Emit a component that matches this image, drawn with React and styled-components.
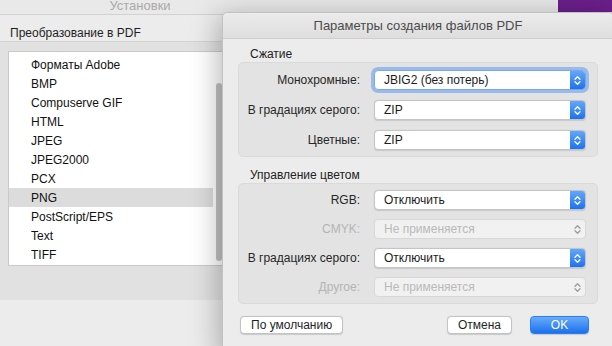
import React from 'react'
import styled, { createGlobalStyle, css } from 'styled-components'

const Global = createGlobalStyle`
  html, body { margin: 0; padding: 0; }
  body {
    font-family: "Liberation Sans", Arial, sans-serif;
    background: #ececec;
    -webkit-font-smoothing: antialiased;
  }
`

const formats = [
  'Форматы Adobe', 'BMP', 'Compuserve GIF', 'HTML', 'JPEG', 'JPEG2000',
  'PCX', 'PNG', 'PostScript/EPS', 'Text', 'TIFF',
]

const Chevrons = ({ color }) => (
  <svg width="9" height="13" viewBox="0 0 9 13">
    <path d="M2 5.2 L4.5 2.7 L7 5.2" fill="none" stroke={color} strokeWidth="1.3" strokeLinecap="round" strokeLinejoin="round" />
    <path d="M2 7.8 L4.5 10.3 L7 7.8" fill="none" stroke={color} strokeWidth="1.3" strokeLinecap="round" strokeLinejoin="round" />
  </svg>
)

function Popup({ value, disabled, focused }) {
  return (
    <Select disabled={disabled} focused={focused}>
      <SelectValue>{value}</SelectValue>
      <Arrow disabled={disabled}>
        <Chevrons color={disabled ? '#9c9c9c' : '#ffffff'} />
      </Arrow>
    </Select>
  )
}

function FieldRow({ label, value, disabled, focused }) {
  return (
    <Row>
      <Label disabled={disabled}>{label}</Label>
      <Popup value={value} disabled={disabled} focused={focused} />
    </Row>
  )
}

export default function App() {
  return (
    <Screen>
      <Global />
      <TopBar>
        <WinTitle>Установки</WinTitle>
        <Desktop />
      </TopBar>
      <Header>Преобразование в PDF</Header>
      <Panel>
        <ListBox>
          <Items>
            {formats.map((f) => (
              <Item key={f} selected={f === 'PNG'}>{f}</Item>
            ))}
          </Items>
          <Track>
            <Thumb />
          </Track>
        </ListBox>
      </Panel>

      <Dialog>
        <DialogTitle>Параметры создания файлов PDF</DialogTitle>
        <Body>
          <SectionLabel>Сжатие</SectionLabel>
          <Group>
            <FieldRow label="Монохромные:" value="JBIG2 (без потерь)" focused />
            <FieldRow label="В градациях серого:" value="ZIP" />
            <FieldRow label="Цветные:" value="ZIP" />
          </Group>
          <SectionLabel second>Управление цветом</SectionLabel>
          <Group tight>
            <FieldRow label="RGB:" value="Отключить" />
            <FieldRow label="CMYK:" value="Не применяется" disabled />
            <FieldRow label="В градациях серого:" value="Отключить" />
            <FieldRow label="Другое:" value="Не применяется" disabled />
          </Group>
          <Buttons>
            <Button>По умолчанию</Button>
            <Spacer />
            <Button wide>Отмена</Button>
            <Button primary>OK</Button>
          </Buttons>
        </Body>
      </Dialog>
    </Screen>
  )
}

const Screen = styled.div`
  position: relative;
  width: 612px;
  height: 346px;
  overflow: hidden;
  background: #ececec;
  display: flex;
  flex-direction: column;
`

const TopBar = styled.div`
  height: 14px;
  display: flex;
  background: #e9e9e9;
  border-bottom: 1px solid #d2d2d2;
`

const WinTitle = styled.div`
  width: 280px;
  text-align: center;
  font-size: 13px;
  line-height: 11px;
  color: #a9a9a9;
`

const Desktop = styled.div`
  margin-left: auto;
  width: 54px;
  height: 12px;
  background: #6a1f8b;
`

const Header = styled.div`
  height: 27px;
  display: flex;
  align-items: flex-end;
  padding: 0 10px 1px;
  box-sizing: border-box;
  font-size: 12px;
  line-height: 14px;
  color: #1f1f1f;
  border-bottom: 1px solid #d3d3d3;
  background: #ececec;
`

const Panel = styled.div`
  height: 258px;
  box-sizing: border-box;
  padding: 9px 0 0 8px;
  background: #e1e1e1;
`

const ListBox = styled.div`
  width: 230px;
  height: 215px;
  box-sizing: border-box;
  background: #ffffff;
  border: 1px solid #c9c9c9;
  display: flex;
`

const Items = styled.div`
  width: 204px;
  padding-top: 3px;
`

const Item = styled.div`
  height: 19px;
  display: flex;
  align-items: center;
  padding-left: 22px;
  font-size: 12px;
  color: #111;
  background: ${(p) => (p.selected ? '#dcdcdc' : 'transparent')};
`

const Track = styled.div`
  flex: 1;
  padding: 31px 0 3px 3px;
`

const Thumb = styled.div`
  width: 6px;
  height: 178px;
  border-radius: 3px;
  background: #c2c2c2;
`

const Dialog = styled.div`
  position: absolute;
  left: 222px;
  top: 12px;
  width: 392px;
  height: 345px;
  box-sizing: border-box;
  background: #ececec;
  border: 1px solid #c2c2c2;
  border-radius: 5px 5px 0 0;
  box-shadow: -4px 4px 28px rgba(0, 0, 0, 0.28);
  display: flex;
  flex-direction: column;
`

const DialogTitle = styled.div`
  height: 25px;
  flex-shrink: 0;
  display: flex;
  align-items: center;
  justify-content: center;
  font-size: 13px;
  color: #4b4b4b;
  background: linear-gradient(#ebebeb, #dedede);
  border-bottom: 1px solid #cfcfcf;
  border-radius: 5px 5px 0 0;
`

const Body = styled.div`
  padding: 0 15px;
  display: flex;
  flex-direction: column;
`

const SectionLabel = styled.div`
  margin-top: ${(p) => (p.second ? '11px' : '8px')};
  margin-bottom: 1px;
  padding-left: 12px;
  font-size: 12px;
  line-height: 14px;
  color: #222;
`

const Group = styled.div`
  display: flex;
  flex-direction: column;
  gap: ${(p) => (p.tight ? '9px' : '10px')};
  padding: ${(p) => (p.tight ? '6px 11px 6px 0' : '7px 11px 6px 0')};
  background: #e3e3e3;
  border: 1px solid #dadada;
  border-radius: 5px;
`

const Row = styled.div`
  display: flex;
  align-items: center;
  height: 20px;
`

const Label = styled.div`
  width: 121px;
  margin-right: 14px;
  text-align: right;
  font-size: 12px;
  color: ${(p) => (p.disabled ? '#b4b4b4' : '#262626')};
`

const Select = styled.div`
  flex: 1;
  height: 20px;
  box-sizing: border-box;
  display: flex;
  align-items: center;
  border-radius: 4px;
  border: 1px solid ${(p) => (p.disabled ? '#d8d8d8' : '#c4c4c4')};
  background: ${(p) => (p.disabled ? '#f1f1f1' : '#ffffff')};
  color: ${(p) => (p.disabled ? '#b9b9b9' : '#1c1c1c')};
  box-shadow: ${(p) => (p.disabled ? 'none' : '0 0.5px 1px rgba(0,0,0,0.12)')};
  ${(p) =>
    p.focused &&
    css`
      box-shadow: 0 0 0 3px rgba(94, 154, 238, 0.55);
      border-color: #7aa7e6;
    `}
`

const SelectValue = styled.div`
  flex: 1;
  padding-left: 9px;
  font-size: 12px;
`

const Arrow = styled.div`
  width: 15px;
  height: 18px;
  display: flex;
  align-items: center;
  justify-content: center;
  border-radius: 0 3px 3px 0;
  background: ${(p) => (p.disabled ? 'transparent' : 'linear-gradient(#63a7fa, #1d72ee)')};
`

const Buttons = styled.div`
  display: flex;
  align-items: center;
  gap: 18px;
  margin-top: 12px;
  padding: 0 9px 0 2px;
`

const Spacer = styled.div`
  flex: 1;
`

const Button = styled.div`
  height: 18px;
  box-sizing: border-box;
  display: flex;
  align-items: center;
  justify-content: center;
  padding: 0 10px;
  min-width: ${(p) => (p.wide ? '63px' : p.primary ? '59px' : '0')};
  border-radius: 4px;
  font-size: 12px;
  border: 1px solid ${(p) => (p.primary ? '#2a7ff0' : '#c3c3c3')};
  color: ${(p) => (p.primary ? '#ffffff' : '#1f1f1f')};
  background: ${(p) => (p.primary ? 'linear-gradient(#68abfa, #1c71ee)' : '#ffffff')};
  box-shadow: 0 0.5px 1px rgba(0, 0, 0, 0.15);
`
